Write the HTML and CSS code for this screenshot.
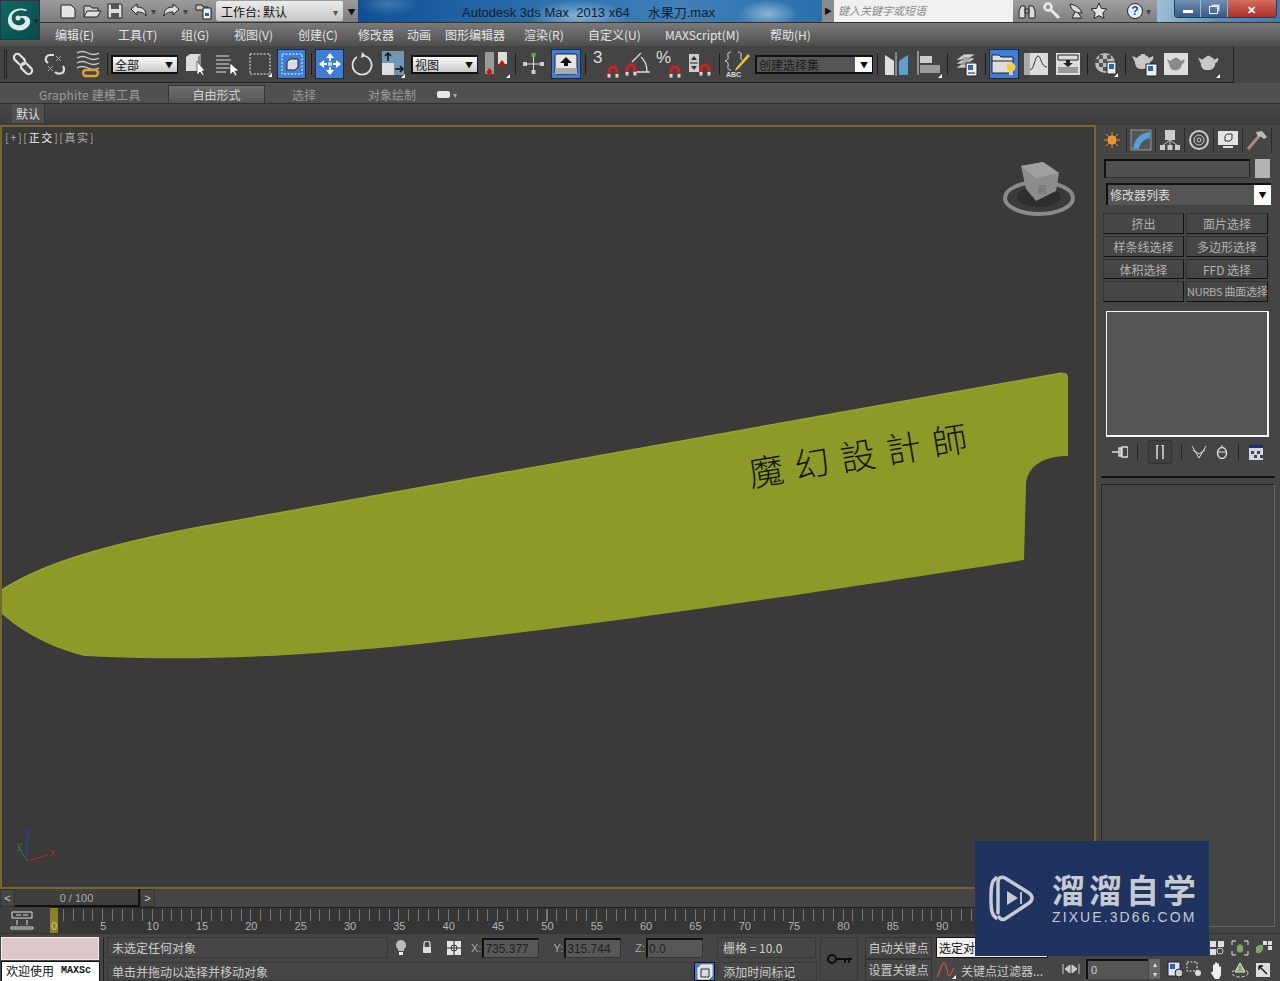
FILE: index.html
```html
<!DOCTYPE html>
<html lang="zh">
<head>
<meta charset="utf-8">
<title>水果刀.max - Autodesk 3ds Max 2013 x64</title>
<link rel="stylesheet" href="styles.css">
</head>
<body>
<svg class="defs" width="0" height="0">
  <symbol id="mag" viewBox="0 0 14 14"><path d="M3 12V7a4 4 0 0 1 8 0v5" fill="none" stroke="#c22" stroke-width="3"/><path d="M1.500 10h3v3.500h-3zM9.500 10h3v3.500h-3z" fill="#d8d8d8"/></symbol>
  <symbol id="pot" viewBox="0 0 24 20"><path d="M1 5l5 2c1-2 3-3 6-3s5 1 6 3l4-2c1 3-1 5-3 6 0 4-3 7-7 7H10c-4 0-6-3-6-7z" fill="currentColor"/><path d="M10 3h4v2h-4z" fill="currentColor"/></symbol>
</svg>
<div class="app">

  <header class="titlebar">
    <div class="qa">
      <svg class="m18" width="20" height="18" viewBox="0 0 20 18"><path d="M3 3h10l4 4v9H3z" fill="#e4e4e4" stroke="#222"/></svg>
      <svg class="m4" width="20" height="18" viewBox="0 0 20 18"><path d="M2 15V4h6l2 2h6v3" fill="#ccc" stroke="#222"/><path d="M2 15l3-6h14l-4 6z" fill="#e0e0e0" stroke="#222"/></svg>
      <svg class="m4" width="18" height="18" viewBox="0 0 18 18"><path d="M2 2h13l1 1v13H2z" fill="#ddd" stroke="#222"/><path d="M5 2h8v5H5zM5 11h8v5H5z" fill="#555"/></svg>
      <svg class="m6" width="18" height="18" viewBox="0 0 18 18"><path d="M1 7l6-5v3c6 0 9 3 9 9-2-3-4-4-9-4v3z" fill="#ddd" stroke="#222"/></svg>
      <span class="mini">▾</span>
      <svg class="m6" width="18" height="18" viewBox="0 0 18 18"><path d="M17 7l-6-5v3C5 5 2 8 2 14c2-3 4-4 9-4v3z" fill="#ddd" stroke="#222"/></svg>
      <span class="mini">▾</span>
      <svg class="m7" width="18" height="18" viewBox="0 0 18 18"><path d="M1 3h6l1 2h5v3H1z" fill="#ccc" stroke="#222"/><path d="M8 6h8v11H8z" fill="#eee" stroke="#222"/><path d="M10 11h4v3h-4z" fill="#2a63b0"/></svg>
      <div class="workspace"><span>工作台: 默认</span><i>▾</i></div>
      <div class="qa-more">▼</div>
    </div>
    <div class="title-blue"><span class="title-text">Autodesk 3ds Max  2013 x64     水果刀.max</span></div>
    <div class="search-arrow">▶</div>
    <div class="search">键入关键字或短语</div>
    <div class="infocenter">
      <svg class="m5" width="18" height="18" viewBox="0 0 18 18"><path d="M3 4h4v12H1V9zM15 4h-4v12h6V9z" fill="#ddd" stroke="#222"/><path d="M7 7h4v4H7z" fill="#999" stroke="#222"/></svg>
      <svg class="m7" width="18" height="18" viewBox="0 0 18 18"><circle cx="5" cy="5" r="3.500" fill="none" stroke="#e8e8e8" stroke-width="2.500"/><path d="M7 7l9 9" stroke="#e8e8e8" stroke-width="3"/></svg>
      <svg class="m6" width="18" height="18" viewBox="0 0 18 18"><path d="M3 2c1 6 5 9 12 9-2-5-6-8-12-9zM8 10l-3 6h10l-4-5" fill="#ddd" stroke="#222"/></svg>
      <svg class="m5" width="18" height="18" viewBox="0 0 18 18"><path d="M9 1l2.400 5.400 5.600.6-4.200 3.800 1.200 5.700L9 13.600l-5 2.900 1.200-5.700L1 7l5.600-.6z" fill="#e4e4e4" stroke="#222"/></svg>
      <span class="help">?</span>
      <span class="mini">▾</span>
    </div>
    <div class="aero">
      <div class="winbtns">
        <span class="wb wb-min"><b></b></span>
        <span class="wb wb-max"><em></em></span>
        <span class="wb wb-close">✕</span>
      </div>
    </div>
  </header>

  <nav class="menubar">
    <span>编辑(E)</span><span>工具(T)</span><span>组(G)</span><span>视图(V)</span><span>创建(C)</span><span>修改器</span><span>动画</span><span>图形编辑器</span><span>渲染(R)</span><span>自定义(U)</span><span>MAXScript(M)</span><span>帮助(H)</span>
  </nav>

  <div class="toolbar">
    <i class="grip m4"></i>
    <svg class="m5" width="22" height="26" viewBox="0 0 22 26"><g fill="none" stroke="#ddd" stroke-width="2.200"><rect x="1" y="5" width="13" height="7" rx="3.500" transform="rotate(45 7.500 8.500)"/><rect x="8" y="14" width="13" height="7" rx="3.500" transform="rotate(45 14.500 17.500)"/></g></svg>
    <svg class="m10" width="22" height="26" viewBox="0 0 22 26"><g fill="none" stroke="#ddd" stroke-width="2.200"><path d="M10 4H6C3 4 1 7 2 10l2 2"/><path d="M19 15c2 3 1 6-1 7-3 1-5 1-7-1"/></g><g stroke="#aaa"><path d="M12 5l5 5M17 5l-5 5M4 15l5 5M9 15l-5 5"/></g></svg>
    <svg class="m10" width="24" height="28" viewBox="0 0 24 28"><g fill="none" stroke="#ccc" stroke-width="1.300"><path d="M1 3q5-3 11 0t11 0M1 8q5-3 11 0t11 0M1 13q5-3 11 0t11 0M1 18q5-3 11 0t11 0"/></g><rect x="7" y="20" width="15" height="6" rx="3" fill="none" stroke="#e0a428" stroke-width="2.400"/></svg>
    <i class="vsep m7"></i>
    <div class="combo combo-light m3 w67"><span>全部</span><i>▼</i></div>
    <svg class="m7" width="20" height="26" viewBox="0 0 20 26"><path d="M1 6l4-3h11v14l-3 3H1z" fill="#ddd"/><path d="M13 6v14l3-3V3z" fill="#8a8a8a"/><path d="M12 10v14l3-3 3 4 1-1-2-4h3z" fill="#fff" stroke="#222" stroke-width=".6"/></svg>
    <svg class="m10" width="25" height="26" viewBox="0 0 25 26"><path d="M1 5h13M1 9h15M1 13h13M1 17h15M1 21h10" stroke="#ddd"/><path d="M15 12v12l3-3 2 4 2-1-2-4h4z" fill="#fff" stroke="#222" stroke-width=".6"/></svg>
    <svg class="m8" width="24" height="26" viewBox="0 0 24 26"><path d="M2 3h20v20H2z" fill="none" stroke="#eee" stroke-dasharray="2 1.400"/><path d="M24 22v4h-4z" fill="#fff"/></svg>
    <div class="ac m5 w29"><svg width="22" height="22" viewBox="0 0 22 22"><path d="M1 1h20v20H1z" fill="none" stroke="#fff" stroke-dasharray="2 1.500"/><path d="M6 9l3-3h8v8l-3 3H6z" fill="#ddd" stroke="#222"/></svg></div>
    <i class="vsep m5"></i>
    <div class="ac m3 w29"><svg width="24" height="24" viewBox="0 0 24 24" fill="#fff"><path d="M12 1l4 5h-3v3h-2V6H8zM12 23l-4-5h3v-3h2v3h3zM1 12l5-4v3h3v2H6v3zM23 12l-5 4v-3h-3v-2h3V8z"/><rect x="10" y="10" width="4" height="4" fill="#bcd"/></svg></div>
    <svg class="m6" width="24" height="26" viewBox="0 0 24 26"><path d="M15 5a9.500 9.500 0 1 1-8 1" fill="none" stroke="#ddd" stroke-width="1.800"/><path d="M12 1l4 4-5 2z" fill="#ddd"/></svg>
    <svg class="m7" width="24" height="28" viewBox="0 0 24 28"><path d="M1 1h22v24H1z" fill="#6f96b4"/><path d="M1 13h12v12H1z" fill="#ddd"/><path d="M7 11V3M4 6l3-3 3 3M14 19h8M19 16l3 3-3 3" fill="none" stroke="#111" stroke-width="1.500"/><path d="M24 24v4h-4z" fill="#fff"/></svg>
    <div class="combo combo-light m6 w67"><span>视图</span><i>▼</i></div>
    <svg class="m5" width="27" height="28" viewBox="0 0 27 28"><path d="M2 2h9v22H2z" fill="#999"/><path d="M15 2h9v12h-9z" fill="#ddd"/><path d="M6.500 18l3 4-3 4-3-4zM19 10l3 4-3 3-3-3z" fill="#c11"/><path d="M27 24v4h-4z" fill="#fff"/></svg>
    <i class="vsep m5"></i>
    <svg class="m6" width="23" height="24" viewBox="0 0 23 24"><path d="M11.500 5v14M2 12h19" stroke="#ddd"/><rect x="9.500" y="1" width="4" height="4" fill="#6a4"/><rect x="9.500" y="18" width="4" height="4" fill="#ccc"/><rect x="1" y="10" width="4" height="4" fill="#ccc"/><rect x="18" y="10" width="4" height="4" fill="#ccc"/></svg>
    <div class="ac m6 w30"><svg width="24" height="22" viewBox="0 0 24 22"><rect x="1" y="1" width="22" height="20" rx="2" fill="#e4e4e4" stroke="#222"/><path d="M1 15h22v6H1z" fill="#aaa"/><path d="M12 4l6 6h-4v3h-4v-3H6z" fill="#111"/></svg></div>
    <i class="vsep m4"></i>
    <div class="snap m6 w28"><b>3</b><svg width="14" height="14"><use href="#mag"/></svg></div>
    <svg class="m4" width="26" height="26" viewBox="0 0 26 26"><path d="M8 11L17 2M17 6q6 5 6 15M9 21h17" fill="none" stroke="#ddd" stroke-width="1.300"/><use href="#mag" x="0" y="11" width="14" height="14"/></svg>
    <div class="snap m5 w27"><b>%</b><svg width="14" height="14"><use href="#mag"/></svg></div>
    <svg class="m6" width="24" height="26" viewBox="0 0 24 26"><path d="M1 3h10v18H1z" fill="#ccc"/><path d="M2 12h8" stroke="#222"/><path d="M6 5l3 4H3zM6 19l-3-4h6z" fill="#333"/><use href="#mag" x="10" y="11" width="14" height="14"/></svg>
    <i class="vsep m7"></i>
    <svg class="m5" width="25" height="28" viewBox="0 0 25 28"><path d="M6 2Q2 2 3 6t-3 5q4 1 3 5t3 4M13 2q4 0 3 4t3 5" fill="none" stroke="#ddd"/><path d="M11 18L23 4l2 2-12 13-3 2z" fill="#e8c040"/><text class="abc" x="1" y="27">ABC</text></svg>
    <div class="combo combo-dark m5 w118"><span>创建选择集</span><i>▼</i></div>
    <i class="vsep m4"></i>
    <svg class="m5" width="27" height="26" viewBox="0 0 27 26"><path d="M2 4l9 6v14H2z" fill="#ddd"/><path d="M13 1v24" stroke="#ccc"/><path d="M25 4l-9 6v14h9z" fill="#5f9fd0"/></svg>
    <svg class="m7" width="25" height="28" viewBox="0 0 25 28"><path d="M1 1v24" stroke="#ddd"/><path d="M3 6h12v7H3z" fill="#ccc"/><path d="M3 15h20v8H3z" fill="#999"/><path d="M25 24v4h-4z" fill="#fff"/></svg>
    <i class="vsep m5"></i>
    <svg class="m7" width="23" height="26" viewBox="0 0 23 26"><path d="M1 9l8-6h11l-7 6zM1 13l8-6 11 0-7 6zM1 17l8-6 11 0-7 6z" fill="#ccc" stroke="#333" stroke-width=".5"/><path d="M11 12h11v13H11z" fill="#eee" stroke="#222"/><path d="M13 14h5v5h-5z" fill="#2a63b0"/><path d="M13 22h7" stroke="#222"/></svg>
    <i class="vsep m7"></i>
    <div class="ac m3 w30"><svg width="26" height="26" viewBox="0 0 26 26"><path d="M1 4h7l2 2h12v16H1z" fill="#ddd" stroke="#222"/><path d="M1 10h21" stroke="#222"/><circle cx="20" cy="16" r="4.500" fill="#f4d040"/><path d="M18 20h4v4h-4z" fill="#ccc"/></svg></div>
    <svg class="m5" width="24" height="24" viewBox="0 0 24 24"><path d="M0 1h24v22H0z" fill="#ddd"/><path d="M0 1h6v22H0z" fill="#aaa"/><path d="M6 18C10 18 11 4 14 4s3 11 9 11" fill="none" stroke="#333"/></svg>
    <svg class="m8" width="24" height="24" viewBox="0 0 24 24"><path d="M0 1h24v22H0z" fill="#ddd"/><path d="M2 3h20v5H2z" fill="none" stroke="#222"/><path d="M2 15h20v6H2z" fill="#999"/><path d="M10 8h4v3h3l-5 4-5-4h3z" fill="#222"/></svg>
    <i class="vsep m7"></i>
    <svg class="m6" width="24" height="26" viewBox="0 0 24 26"><circle cx="11" cy="12" r="10" fill="#bbb"/><path d="M5 4h4v4H5zM13 4h4v4h-4zM9 8h4v4H9zM1 8h4v4H1zM5 12h4v4H5zM13 12h4v4h-4zM9 16h4v4H9z" fill="#555"/><path d="M13 11h9v12h-9z" fill="#eee" stroke="#222"/><path d="M15 13h5v5h-5z" fill="#2a63b0"/><path d="M24 22v4h-4z" fill="#fff"/></svg>
    <i class="vsep m7"></i>
    <svg class="m5 pot-light" width="29" height="26" viewBox="0 0 29 26"><use href="#pot" x="0" y="0" width="24" height="20"/><path d="M15 13h11v12H15z" fill="#eee" stroke="#222"/><path d="M17 15h5v5h-5z" fill="#2a63b0"/></svg>
    <svg class="m4 pot-dark" width="24" height="24" viewBox="0 0 24 24"><path d="M0 1h24v22H0z" fill="#ddd"/><use href="#pot" x="2" y="3" width="20" height="17"/></svg>
    <svg class="m9 pot-light" width="23" height="28" viewBox="0 0 23 28"><use href="#pot" x="0" y="3" width="23" height="19"/><path d="M23 24v4h-4z" fill="#fff"/></svg>
  </div>

  <div class="ribbon-tabs">
    <span class="rt rt-graphite">Graphite 建模工具</span>
    <span class="rt rt-free">自由形式</span>
    <span class="rt rt-sel">选择</span>
    <span class="rt rt-paint">对象绘制</span>
    <span class="rt-menu"><b></b><i>▾</i></span>
  </div>
  <div class="ribbon-sub"><span>默认</span></div>

  <div class="workarea">
    <div class="leftcol">
      <main class="viewport">
        <div class="vp-label">[+][<b>正交</b>][真实]</div>
        <svg class="scene" viewBox="0 125 1096 764" width="1096" height="764">
          <path class="blade" d="M2 590C40 565 100 546 200 527L1062 373Q1068 372 1068 378V456C1045 456 1027 465 1026 485L1024 560C800 595 600 625 420 644C300 656 200 662 85 656C50 648 20 630 2 614Z"/>
          <path class="blade-edge" d="M2 590C40 565 100 546 200 527L1062 373"/>
          <text class="blade-text" transform="translate(751 487) rotate(-9.5)">魔幻設計師</text>
          <g class="gizmo">
            <ellipse cx="1039" cy="198" rx="34" ry="16" fill="none" stroke="#8a8a8a" stroke-width="4"/>
            <ellipse cx="1039" cy="197" rx="22" ry="10" fill="#2e2e2e"/>
            <path d="M1021 166l22-4 16 11-3 18-20 10-10-12z" fill="#8c8c8c"/>
            <path d="M1021 166l22-4 16 11-23 5z" fill="#a0a0a0"/>
            <text class="gizmo-text" x="1042" y="193">前</text>
          </g>
          <g class="axes" fill="none">
            <path d="M27 861V836" stroke="#2a3fb0"/>
            <path d="M27 861L48 855" stroke="#b02828"/>
            <path d="M27 861L18 846" stroke="#2f7a3c"/>
            <text x="27" y="836" fill="#2a3fb0">z</text>
            <text x="50" y="856" fill="#b02828">x</text>
            <text x="17" y="849" fill="#2f7a3c">y</text>
          </g>
        </svg>
      </main>
      <div class="slider">
        <span class="sl-btn">&lt;</span>
        <span class="sl-track">0 / 100</span>
        <span class="sl-btn">&gt;</span>
      </div>
      <div class="timeline">
        <div class="tl-icon"><svg width="24" height="20" viewBox="0 0 24 20"><path d="M2 2h20v6H2zM1 17h22v2H1z" fill="none" stroke="#ddd"/><path d="M6 5h5M13 5h5M7 15v-5M17 15v-5" stroke="#ddd"/></svg></div>
        <div class="ruler">
          <i class="marker"></i>
          <div class="nums"><span>0</span><span>5</span><span>10</span><span>15</span><span>20</span><span>25</span><span>30</span><span>35</span><span>40</span><span>45</span><span>50</span><span>55</span><span>60</span><span>65</span><span>70</span><span>75</span><span>80</span><span>85</span><span>90</span></div>
        </div>
      </div>
    </div>

    <aside class="panel">
      <div class="cp-tabs">
        <span class="cp-tab"><svg width="18" height="18" viewBox="0 0 18 18"><circle cx="9" cy="9" r="4.500" fill="#f0a030"/><path d="M9 1v16M1 9h16M3 3l12 12M15 3L3 15" stroke="#e08a28"/></svg></span>
        <span class="cp-tab"><svg width="22" height="22" viewBox="0 0 22 22"><path d="M1 1h20v20H1z" fill="#555" stroke="#999"/><path d="M3 20C4 10 10 4 20 3v6C14 10 10 14 9 20z" fill="#5aa0d8"/></svg></span>
        <span class="cp-tab"><svg width="22" height="22" viewBox="0 0 22 22"><path d="M11 11L3 17M11 11v6M11 11l8 6" stroke="#ccc"/><path d="M6 1h10v10H6zM1 16h5v5H1zM8.500 16h5v5h-5zM16 16h5v5h-5z" fill="#ccc"/></svg></span>
        <span class="cp-tab"><svg width="22" height="22" viewBox="0 0 22 22" fill="none" stroke="#ccc"><circle cx="11" cy="11" r="9" stroke-width="2"/><circle cx="11" cy="11" r="5"/><circle cx="11" cy="11" r="2"/></svg></span>
        <span class="cp-tab"><svg width="22" height="20" viewBox="0 0 22 20"><path d="M1 1h20v14H1z" fill="#e4e4e4"/><path d="M6 17h10" stroke="#ddd" stroke-width="2"/><path d="M8 6l2-2h5v5l-2 2H8z" fill="none" stroke="#333"/></svg></span>
        <span class="cp-tab"><svg width="22" height="22" viewBox="0 0 22 22"><path d="M2 20L14 6" stroke="#a88" stroke-width="3"/><path d="M10 3l6-1 5 6-3 2-4-3-2 1z" fill="#bbb"/></svg></span>
      </div>
      <div class="name-row"><div class="name-input"></div><div class="swatch"></div></div>
      <div class="mod-list"><span>修改器列表</span><i>▼</i></div>
      <div class="mod-btns">
        <span>挤出</span><span>面片选择</span><span>样条线选择</span><span>多边形选择</span><span>体积选择</span><span>FFD 选择</span><span></span><span class="tight">NURBS 曲面选择</span>
      </div>
      <div class="stack"></div>
      <div class="stack-tools">
        <svg width="16" height="12" viewBox="0 0 16 12"><path d="M0 6h7M7 2h2v8H7zM10 1h6v10h-6z" fill="none" stroke="#ddd" stroke-width="1.500"/></svg>
        <i class="vsep tall"></i>
        <span class="st-active"><svg width="10" height="14" viewBox="0 0 10 14"><path d="M2 0v14M8 0v14M2 0h2M8 0H6" stroke="#ddd" stroke-width="1.500" fill="none"/></svg></span>
        <i class="vsep tall"></i>
        <svg width="16" height="14" viewBox="0 0 16 14"><path d="M1 1l7 12 7-12M2 5l6 4 6-4" fill="none" stroke="#ddd"/></svg>
        <svg width="12" height="14" viewBox="0 0 12 14"><ellipse cx="6" cy="8" rx="4.500" ry="5.500" fill="none" stroke="#ddd" stroke-width="1.400"/><path d="M1 7h10M6 0v3" stroke="#ddd"/></svg>
        <i class="vsep tall"></i>
        <svg width="16" height="15" viewBox="0 0 16 15"><path d="M1 0h14v15H1z" fill="#cfd6e8"/><path d="M1 0h14v3H1z" fill="#16307a"/><path d="M3 6h3v3H3zM9 6h3v3H9zM6 10h3v3H6zM12 10h3v3h-3z" fill="#444"/></svg>
      </div>
      <div class="panel-rule"></div>
      <div class="rollout"></div>
    </aside>
  </div>

  <footer class="bottom">
    <div class="script">
      <div class="script-pink"></div>
      <div class="script-white"><span>欢迎使用</span><span class="mono">MAXSc</span></div>
    </div>
    <i class="bsep"></i>
    <div class="status">
      <div class="s-row">
        <div class="s-box s-sel">未选定任何对象</div>
        <svg class="m7" width="12" height="16" viewBox="0 0 12 16"><path d="M6 0a5 5 0 0 1 3 9v2H3V9a5 5 0 0 1 3-9z" fill="#bbb"/><path d="M4 12h4v3H4z" fill="#eee"/></svg>
        <svg class="m14" width="12" height="14" viewBox="0 0 12 14"><path d="M3 6V3a3 3 0 0 1 6 0v3" fill="none" stroke="#ccc" stroke-width="1.500"/><path d="M2 6h8v6H2z" fill="#ddd"/></svg>
        <svg class="m14" width="14" height="14" viewBox="0 0 14 14"><path d="M0 0h14v14H0z" fill="#e4e4e4"/><circle cx="7" cy="7" r="3" fill="none" stroke="#333"/><path d="M7 0v14M0 7h14" stroke="#333"/></svg>
        <label class="coord m10">X:<span>735.377</span></label>
        <label class="coord m14">Y:<span>315.744</span></label>
        <label class="coord m14">Z:<span>0.0</span></label>
        <div class="s-box s-grid">栅格 = 10.0</div>
      </div>
      <div class="s-row s-row2">
        <div class="s-box s-prompt">单击并拖动以选择并移动对象</div>
        <span class="s-blue"><svg width="16" height="16" viewBox="0 0 16 16"><path d="M1 4l3-3h11v11l-3 3H1z" fill="#ddd" stroke="#fff"/><path d="M4 5h8v8H4z" fill="none" stroke="#333"/></svg></span>
        <div class="s-box s-time">添加时间标记</div>
      </div>
    </div>
    <div class="keybtn"><svg width="26" height="12" viewBox="0 0 26 12"><circle cx="6" cy="6" r="4" fill="none" stroke="#0c0c0c" stroke-width="2"/><path d="M10 5h16v2h-2v3h-2V7h-2v3h-2V7h-8z" fill="#0c0c0c"/></svg></div>
    <div class="keys"><span>自动关键点</span><span>设置关键点</span></div>
    <div class="keyfilters">
      <div class="kf-top">选定对象</div>
      <div class="kf-bot">
        <svg width="20" height="18" viewBox="0 0 20 18"><path d="M1 16C4 12 5 2 8 2s3 13 5 13 3-6 5-8" fill="none" stroke="#c85050" stroke-width="1.300"/><path d="M20 14v4h-4z" fill="#fff"/></svg>
        <span>关键点过滤器...</span>
      </div>
    </div>
    <div class="playback">
      <div class="pb-row">
        <svg class="m14" width="18" height="10" viewBox="0 0 18 10"><path d="M1 0v10M8 1L3 5l5 4zM10 1l5 4-5 4zM17 0v10" fill="#ccc" stroke="#ccc"/></svg>
        <div class="frame-input">0</div>
        <div class="spin"><i>▴</i><i>▾</i></div>
        <svg class="m7" width="16" height="16" viewBox="0 0 16 16"><path d="M1 1h12v14H1z" fill="#dfe5ee" stroke="#222"/><path d="M3 3h5v5H3z" fill="#2a63b0"/><circle cx="12" cy="12" r="4" fill="#ccc" stroke="#222"/></svg>
        <svg class="m3" width="16" height="16" viewBox="0 0 16 16"><path d="M1 1h10v9H1z" fill="none" stroke="#eee" stroke-dasharray="2 1.500"/><circle cx="12" cy="12" r="3" fill="#ddd"/></svg>
      </div>
    </div>
    <div class="nav">
      <svg width="16" height="16" viewBox="0 0 16 16"><path d="M1 1h6v6H1zM9 1h6v6H9zM1 9h6v6H1z" fill="#ddd"/><circle cx="11" cy="11" r="3" fill="none" stroke="#ccc"/></svg>
      <svg width="18" height="16" viewBox="0 0 18 16"><path d="M1 5V1h4M13 1h4v4M17 11v4h-4M5 15H1v-4" fill="none" stroke="#eee"/><path d="M6 6l3-2 3 2v5l-3 2-3-2z" fill="#7aa860"/></svg>
      <svg width="18" height="16" viewBox="0 0 18 16"><path d="M9 1h4v4H9zM14 1h4v4h-4zM14 6h4v4h-4z" fill="#ddd"/><path d="M2 7l3-2h4v5l-3 3H2z" fill="#7aa860"/></svg>
      <svg width="18" height="18" viewBox="0 0 18 18"><path d="M5 10V4l1-1 1 1v4-6l1-1 1 1v6-5l1-1 1 1v6-3l1-1 1 1v8l-2 4H7l-4-6 1-1z" fill="#eee"/></svg>
      <svg width="18" height="18" viewBox="0 0 18 18"><path d="M9 2l5 9H4z" fill="#7aa860" stroke="#eee"/><ellipse cx="9" cy="12" rx="8" ry="4" fill="none" stroke="#ddd" stroke-dasharray="3 2"/></svg>
      <svg width="16" height="16" viewBox="0 0 16 16"><path d="M1 1h14v14H1z" fill="#ddd"/><path d="M4 4l8 8M4 4h4M4 4v4" stroke="#111" stroke-width="1.400" fill="none"/></svg>
    </div>
  </footer>

  <div class="logo">
    <svg width="30" height="30" viewBox="0 0 30 30"><path d="M23 5C15 1 5 5 4 14c-1 8 7 13 15 11 6-2 9-8 6-12-3-3-8-3-11 0 3-1 7 0 7 3s-4 5-8 4-6-5-5-9 7-7 14-5z" fill="#dfe8e8"/><circle cx="14" cy="13" r="2.500" fill="#dfe8e8"/></svg>
    <i>▾</i>
  </div>

  <div class="watermark">
    <svg width="46" height="50" viewBox="0 0 46 50"><path d="M8 5C4 8 3 12 3 25s1 17 5 20" fill="none" stroke="#c6cad2" stroke-width="3.500" stroke-linecap="round"/><path d="M10 40V9c0-4 3-6 7-4l24 15c4 3 4 7 0 10L17 46c-3 1-5 0-6-2" fill="none" stroke="#c6cad2" stroke-width="3.500" stroke-linecap="round"/><path d="M19 18l11 7-11 7z" fill="#c6cad2"/><path d="M33 19v12" stroke="#c6cad2" stroke-width="1.800"/></svg>
    <div class="wm-text">
      <div class="wm-cn">溜溜自学</div>
      <div class="wm-en">ZIXUE.3D66.COM</div>
    </div>
  </div>
</div>
</body>
</html>
```
FILE: styles.css
```css
* { box-sizing: border-box; }
html, body { margin: 0; padding: 0; background: #444; }
body { font-family: "Noto Sans CJK SC", "Liberation Sans", sans-serif; font-size: 12px; color: #ccc; }
svg { display: block; flex: none; }
i { font-style: normal; }
.defs { position: absolute; }
.pot-light { color: #c8c8c8; }
.pot-dark { color: #8a8a8a; }

.app { position: relative; width: 1280px; height: 981px; overflow: hidden; display: flex; flex-direction: column; background: #454545; }

.m3 { margin-left: 3px; } .m4 { margin-left: 4px; } .m5 { margin-left: 5px; } .m6 { margin-left: 6px; }
.m7 { margin-left: 7px; } .m8 { margin-left: 8px; } .m9 { margin-left: 9px; } .m10 { margin-left: 10px; }
.m14 { margin-left: 14px; } .m18 { margin-left: 18px; }
.w27 { width: 27px; } .w28 { width: 28px; } .w29 { width: 29px; } .w30 { width: 30px; } .w67 { width: 67px; } .w118 { width: 118px; }

/* title bar */
.titlebar { height: 23px; flex: none; display: flex; align-items: stretch; border-bottom: 1px solid #333; }
.qa { width: 358px; padding-left: 40px; display: flex; align-items: center; background: linear-gradient(#9c9c9c, #7c7c7c); }
.mini { margin-left: 3px; color: #444; font-size: 10px; line-height: 1; }
.workspace { margin-left: 3px; width: 129px; height: 20px; padding: 0 5px; display: flex; align-items: center; justify-content: space-between; background: linear-gradient(#ececec, #c6c6c6); border-radius: 2px; color: #111; font-size: 12px; }
.workspace i { color: #555; font-size: 10px; }
.qa-more { margin-left: 2px; width: 13px; text-align: center; color: #111; font-size: 8px; }
.title-blue { width: 464px; display: flex; align-items: center; padding-left: 104px; background:
  radial-gradient(ellipse 30px 14px at 410px 14px, rgba(255,255,255,.45), transparent),
  radial-gradient(ellipse 50px 16px at 220px 16px, rgba(190,220,240,.6), transparent),
  radial-gradient(ellipse 30px 12px at 30px 4px, rgba(255,255,255,.2), transparent),
  linear-gradient(90deg, #0e4f95, #2d70ad 40%, #3f80b8 70%, #2a70ac); }
.title-text { white-space: pre; color: #10202f; font-family: "Liberation Sans", "Noto Sans CJK SC", sans-serif; font-size: 13px; }
.search-arrow { width: 12px; background: #8a8a8a; color: #111; font-size: 8px; line-height: 22px; text-align: center; }
.search { width: 179px; padding-left: 4px; background: #f0f0f0; color: #8a8a8a; font-size: 11px; font-style: italic; line-height: 21px; }
.infocenter { width: 144px; display: flex; align-items: center; background: linear-gradient(#a0a0a0, #7e7e7e); }
.help { margin-left: 19px; width: 16px; height: 16px; border-radius: 50%; background: #e8eef8; border: 1px solid #222; color: #1a4fa8; font: bold 12px/14px "Liberation Sans", sans-serif; text-align: center; }
.aero { flex: 1; background: linear-gradient(100deg, #9fc0d8, #5a90b8 50%, #3f7da8); }
.winbtns { display: flex; margin-left: 17px; width: 103px; height: 18px; border: 1px solid #24405c; border-top: 0; border-radius: 0 0 4px 4px; overflow: hidden; }
.wb { display: flex; align-items: center; justify-content: center; width: 27px; background: linear-gradient(#6f8fb2, #3a5a84); border-right: 1px solid #a0b4c8; }
.wb-close { width: 49px; border-right: 0; background: linear-gradient(#d86a60, #a83028); color: #fff; font-size: 11px; font-weight: 700; }
.wb-min b { width: 10px; height: 3px; background: #fff; margin-top: 5px; }
.wb-max em { width: 9px; height: 8px; margin: 2px 2px 0 0; border: 1px solid #fff; box-shadow: 2px -2px 0 -0.5px #cfd8e2; }

/* menu */
.menubar { height: 23px; flex: none; display: flex; align-items: center; padding-left: 55px; background: linear-gradient(#7a7a7a, #4e4e4e); color: #e4e4e4; font-size: 12px; }
.menubar span:nth-child(1) { width: 63px; } .menubar span:nth-child(2) { width: 63px; }
.menubar span:nth-child(3) { width: 53px; } .menubar span:nth-child(4) { width: 64px; }
.menubar span:nth-child(5) { width: 60px; } .menubar span:nth-child(6) { width: 49px; }
.menubar span:nth-child(7) { width: 38px; } .menubar span:nth-child(8) { width: 79px; }
.menubar span:nth-child(9) { width: 64px; } .menubar span:nth-child(10) { width: 77px; }
.menubar span:nth-child(11) { width: 105px; }

/* toolbar */
.toolbar { width: 1234px; height: 37px; flex: none; display: flex; align-items: center; background: #444; border-right: 1px solid #222; border-bottom: 1px solid #222; }
.grip { width: 3px; height: 30px; border-left: 1px solid #222; border-right: 1px solid #222; flex: none; }
.vsep { width: 1px; height: 22px; background: #1c1c1c; flex: none; }
.ac { height: 30px; display: flex; align-items: center; justify-content: center; flex: none; background: #3d7fd8; border: 1px solid #1f2a3c; }
.snap { display: flex; align-items: flex-end; justify-content: flex-end; height: 28px; position: relative; flex: none; }
.snap b { position: absolute; left: 1px; top: -2px; font: 400 17px/20px "Liberation Sans", sans-serif; color: #ddd; }
.abc { font: 700 7px "Liberation Sans", sans-serif; fill: #ddd; }
.combo { height: 19px; display: flex; align-items: center; justify-content: space-between; flex: none; border: 2px solid #111; border-right-width: 1px; color: #111; font-size: 12px; padding-left: 2px; }
.combo i { width: 16px; text-align: center; font-size: 8px; color: #111; }
.combo-light { background: linear-gradient(#fbfbfb, #c8c8c8); }
.combo-dark { background: linear-gradient(90deg, #555 85%, #fff 85%); color: #1a1a1a; }

/* ribbon */
.ribbon-tabs { height: 21px; flex: none; display: flex; align-items: flex-end; padding-left: 10px; background: #505050; border-bottom: 1px solid #2e2e2e; font-size: 12px; color: #9a9a9a; }
.rt { height: 18px; line-height: 19px; }
.rt-graphite { width: 158px; padding-left: 29px; letter-spacing: .2px; white-space: nowrap; }
.rt-free { width: 97px; text-align: center; color: #d2d2d2; background: linear-gradient(#6e6e6e, #555); border: 1px solid #333; border-bottom: 0; height: 18px; line-height: 18px; }
.rt-sel { width: 76px; padding-left: 27px; }
.rt-paint { width: 96px; padding-left: 27px; }
.rt-menu { display: flex; align-items: center; height: 18px; }
.rt-menu b { width: 13px; height: 7px; border-radius: 2px; background: #e8e8e8; }
.rt-menu i { margin-left: 3px; font-size: 8px; color: #aaa; }
.ribbon-sub { height: 21px; flex: none; padding-left: 12px; background: linear-gradient(#474747, #3c3c3c); }
.ribbon-sub span { display: block; width: 33px; height: 19px; line-height: 20px; text-align: center; color: #ddd; background: #505050; border-right: 1px solid #333; }

/* work area */
.workarea { height: 808px; flex: none; display: flex; }
.leftcol { width: 1096px; display: flex; flex-direction: column; }
.viewport { position: relative; height: 764px; flex: none; background: #3a3a3a; }
.viewport::after { content: ""; position: absolute; inset: 0; border: 2px solid #75682e; pointer-events: none; }
.vp-label { position: absolute; left: 5px; top: 4px; font-size: 11px; line-height: 16px; letter-spacing: 1.600px; color: #aaa; z-index: 1; }
.vp-label b { font-weight: 400; color: #eee; }
.scene { position: absolute; left: 0; top: 0; }
.blade { fill: #8e9a28; }
.blade-edge { stroke: #98a42e; stroke-width: 1.500; fill: none; }
.blade-text { font-size: 35px; letter-spacing: 11.500px; fill: #14160a; font-weight: 300; }
.gizmo-text { font-size: 9px; fill: #666; text-anchor: middle; }
.axes text { font: 10px "Liberation Sans", sans-serif; stroke: none; }

.slider { height: 18px; flex: none; display: flex; background: #454545; }
.sl-btn { width: 15px; text-align: center; line-height: 17px; color: #ccc; border: 1px solid #333; font-size: 11px; font-family: "Liberation Sans", sans-serif; }
.sl-track { width: 125px; text-align: center; color: #aaa; font: 11px/18px "Liberation Sans", sans-serif; background: #3f3f3f; border-right: 2px solid #111; border-bottom: 2px solid #111; }
.timeline { height: 26px; flex: none; display: flex; }
.tl-icon { width: 50px; display: flex; align-items: center; justify-content: center; padding-right: 6px; background: #3f3f3f; }
.ruler { flex: 1; position: relative; background:
  repeating-linear-gradient(90deg, #777 0 1px, transparent 1px 9.87px) 3px 1px / 100% 12px no-repeat, #363636; border-top: 1px solid #222; }
.marker { position: absolute; left: 0; top: 0; width: 8px; height: 25px; background: #8a8228; }
.nums { position: absolute; left: 4px; top: 11px; display: flex; }
.nums span { width: 49.350px; font: 11px/14px "Liberation Sans", sans-serif; color: #b4b4b4; transform: translateX(-24.700px); text-align: center; flex: none; }
.nums span:first-child { color: #d8d060; }

/* command panel */
.panel { flex: 1; display: flex; flex-direction: column; padding-top: 3px; background: #454545; }
.cp-tabs { height: 24px; display: flex; padding-left: 2px; }
.cp-tab { width: 29px; display: flex; align-items: center; justify-content: center; border-right: 1px solid #2a2a2a; }
.name-row { margin: 7px 0 0 8px; display: flex; }
.name-input { width: 146px; height: 19px; background: #505050; border: 2px solid #111; border-right: 1px solid #222; border-bottom: 1px solid #333; }
.swatch { margin-left: 5px; width: 15px; height: 19px; background: #b4b4b4; }
.mod-list { margin: 5px 0 0 10px; width: 165px; height: 22px; display: flex; justify-content: space-between; background: #555; border-top: 2px solid #111; border-left: 2px solid #111; color: #ddd; line-height: 19px; padding-left: 2px; }
.mod-list i { width: 17px; background: #fff; color: #111; font-size: 8px; text-align: center; }
.mod-btns { margin: 8px 0 0 7px; display: grid; grid-template-columns: 81px 82px; column-gap: 2px; row-gap: 2px; grid-auto-rows: 20.800px; }
.mod-btns span { background: #464646; border: 1px solid #333; border-right-color: #111; border-bottom-color: #111; text-align: center; color: #b2b2b2; line-height: 19px; white-space: nowrap; overflow: hidden; }
.mod-btns .tight { font-size: 11px; letter-spacing: -.25px; overflow: visible; }
.stack { margin: 9px 0 0 10px; width: 163px; height: 126px; background: #555; border: 2px solid #f4f4f4; border-width: 1px 2px 2px 1px; }
.stack-tools { margin: 3px 0 0 16px; height: 24px; width: 152px; display: flex; align-items: center; justify-content: space-between; }
.vsep.tall { height: 16px; background: #222; }
.st-active { width: 24px; height: 24px; display: flex; align-items: center; justify-content: center; background: #3f3f3f; border: 1px solid #333; }
.panel-rule { margin: 12px 5px 0 5px; height: 2px; background: #111; }
.rollout { margin: 6px 5px 6px 5px; flex: 1; border: 1px solid #222; border-right-color: #666; border-bottom-color: #666; }

/* bottom */
.bottom { flex: 1; display: flex; background: #454545; border-top: 1px solid #333; }
.script { width: 100px; padding: 3px 0 0 1px; flex: none; }
.script-pink { width: 98px; height: 23px; background: #dfc6c8; border: 1px solid #eee; }
.script-white { margin-top: 1px; width: 99px; height: 20px; padding: 0 0 2px 4px; background: #fff; color: #111; display: flex; align-items: center; gap: 7px; line-height: 16px; white-space: nowrap; border: 1px solid #111; border-bottom: 0; }
.mono { font: 700 10px/14px "Liberation Mono", monospace; }
.bsep { margin: 3px 2px 0 3px; width: 1px; background: #222; flex: none; }
.status { width: 711px; flex: none; padding: 3px 0 0 1px; display: flex; flex-direction: column; gap: 4px; }
.s-row { height: 21px; display: flex; align-items: center; }
.s-box { height: 21px; line-height: 19px; padding-left: 4px; color: #ccc; background: #464646; border: 1px solid #393939; white-space: nowrap; }
.s-sel { width: 281px; }
.coord { display: flex; align-items: center; color: #aaa; font: 11px "Liberation Sans", sans-serif; gap: 1px; }
.coord span { width: 57px; height: 20px; line-height: 19px; padding-left: 1px; background: #575757; border: 1px solid #333; border-left: 2px solid #111; border-top: 2px solid #111; color: #222; font-size: 12px; }
.s-grid { margin-left: 14px; width: 99px; padding-left: 5px; }
.s-row2 { height: 19px; }
.s-prompt { width: 586px; height: 19px; line-height: 17px; }
.s-blue { margin-left: 2px; width: 21px; height: 19px; display: flex; align-items: center; justify-content: center; background: #3d7fd8; border: 1px solid #111; }
.s-time { margin-left: 2px; width: 100px; padding-left: 5px; height: 19px; line-height: 17px; }
.keybtn { margin: 3px 0 0 3px; width: 38px; flex: none; display: flex; align-items: center; justify-content: center; border: 1px solid #3a3a3a; }
.keys { margin: 3px 0 0 7px; width: 67px; flex: none; display: flex; flex-direction: column; }
.keys span { height: 22px; line-height: 20px; text-align: center; color: #ccc; border: 1px solid #333; white-space: nowrap; }
.keyfilters { margin: 3px 0 0 4px; width: 112px; flex: none; display: flex; flex-direction: column; }
.kf-top { height: 21px; background: #f0f0f0; color: #111; border: 1px solid #111; padding-left: 2px; line-height: 19px; }
.kf-bot { margin-top: 1px; height: 22px; display: flex; align-items: center; gap: 5px; color: #ccc; white-space: nowrap; }
.playback { width: 158px; flex: none; display: flex; flex-direction: column; justify-content: flex-end; }
.pb-row { height: 22px; display: flex; align-items: center; margin-bottom: 1px; }
.frame-input { margin-left: 6px; width: 62px; height: 20px; background: #555; border-left: 2px solid #111; border-top: 2px solid #111; font: 11px/18px "Liberation Sans", sans-serif; color: #ccc; padding-left: 3px; flex: none; }
.spin { margin-left: 1px; width: 11px; height: 20px; display: flex; flex-direction: column; align-items: center; background: #666; color: #ddd; font-size: 8px; line-height: 10px; flex: none; }
.nav { padding: 4px 6px 0 0; flex: 1; display: grid; grid-template-columns: repeat(3, 1fr); justify-items: center; align-items: center; }

/* overlays */
.logo { position: absolute; left: 0; top: 0; width: 40px; height: 40px; background: linear-gradient(135deg, #0e6a66, #0a4a48); border: 1px solid #334; display: flex; align-items: center; padding-left: 3px; }
.logo i { color: #222; font-size: 9px; }
.watermark { position: absolute; left: 975px; top: 841px; width: 234px; height: 115px; background: #1e3360; display: flex; align-items: center; padding: 0 0 2px 13px; }
.wm-text { margin-left: 18px; color: #c6cad2; }
.wm-cn { font-size: 33px; line-height: 37px; font-weight: 700; letter-spacing: 4px; white-space: nowrap; }
.wm-en { margin-top: 2px; font: 14px/14px "Liberation Sans", sans-serif; letter-spacing: 2.100px; white-space: nowrap; }
```
